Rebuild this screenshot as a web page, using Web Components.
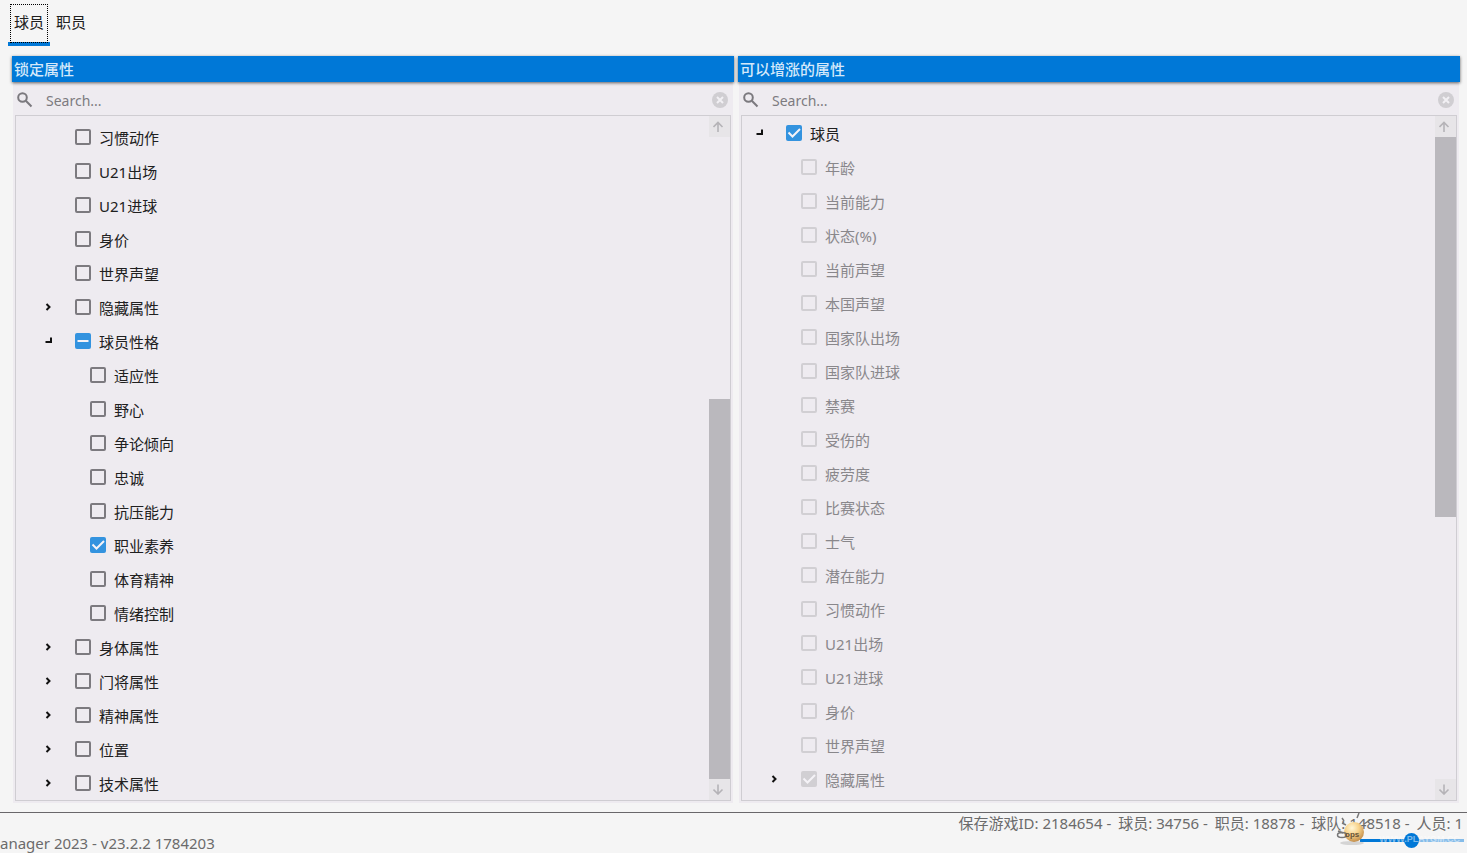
<!DOCTYPE html>
<html lang="zh-CN">
<head>
<meta charset="utf-8">
<title>属性设置</title>
<style>
  html, body {
    height: 100%;
    margin: 0;
  }
  body {
    background: #f5f5f5;
    color: #202020;
    font: 15px/20px "Noto Sans", "Noto Sans CJK SC", sans-serif;
    overflow: hidden;
  }
</style>
</head>
<body>
<attr-app></attr-app>
<script>
class TabBar extends HTMLElement {
  constructor() {
    super();
    this.attachShadow({ mode: 'open' });
  }

  connectedCallback() {
    const tabs = this.getAttribute('tabs').split(',');

    this.shadowRoot.innerHTML = `
      <style>
        :host {
          display: block;
          padding: 2px 8px 10px;
        }
        nav {
          display: flex;
        }
        button {
          box-sizing: border-box;
          height: 44px;
          padding: 2px 2px 3px;
          border: 0;
          border-bottom: 4px solid transparent;
          background: none;
          color: inherit;
          font: inherit;
        }
        button[aria-selected="true"] {
          border-bottom-color: #0078d7;
        }
        span {
          display: flex;
          align-items: center;
          box-sizing: border-box;
          height: 39px;
          padding: 0 3px 4px;
          border: 1px solid transparent;
        }
        button[aria-selected="true"] span {
          border: 1px dotted #000;
        }
      </style>
      <nav role="tablist">
        ${tabs.map((t, i) => `<button role="tab" aria-selected="${i === 0}"><span>${t}</span></button>`).join('')}
      </nav>
    `;
  }
}

class TreeItem extends HTMLElement {
  constructor() {
    super();
    this.attachShadow({ mode: 'open' });
  }

  connectedCallback() {
    const level = Number(this.getAttribute('level') || 0);
    const branch = this.getAttribute('branch');
    const state = this.getAttribute('state');
    const disabled = this.hasAttribute('disabled');
    const arrows = {
      closed: '<path d="M3.500 3 6.500 6 3.500 9" stroke-width="2"/>',
      open: '<path d="M8 2.500V7H2.500" stroke-width="2"/>'
    };

    this.shadowRoot.innerHTML = `
      <style>
        :host {
          display: block;
          flex: none;
        }
        .row {
          display: flex;
          align-items: center;
          height: 34px;
          padding-left: ${12 + level * 15}px;
        }
        .arrow {
          display: flex;
          width: 32px;
          height: 12px;
          padding: 0;
          border: 0;
          background: none;
        }
        svg {
          fill: none;
          stroke: #111;
        }
        label {
          display: flex;
          align-items: center;
          gap: 8px;
          color: ${disabled ? '#89878b' : 'inherit'};
        }
        span {
          padding-top: 2px;
        }
        input {
          appearance: none;
          flex: none;
          width: 16px;
          height: 16px;
          margin: 0;
          border: 2px solid #7c7a7f;
          border-radius: 2px;
        }
        input:disabled {
          border-color: #d1cfd3;
        }
        input:checked, input:indeterminate {
          border: 0;
          background-color: #3393df;
        }
        input:disabled:checked {
          background-color: #d1cfd3;
        }
        .box {
          display: grid;
        }
        .box > * {
          grid-area: 1 / 1;
        }
        .mark {
          stroke: #f5f3f7;
          stroke-width: 2;
          pointer-events: none;
        }
      </style>
      <div class="row">
        ${branch
          ? `<button class="arrow" aria-label="${branch}"><svg width="12" height="12">${arrows[branch]}</svg></button>`
          : '<div class="arrow"></div>'}
        <label>
          <div class="box">
            <input type="checkbox" ${state === 'checked' ? 'checked' : ''} ${disabled ? 'disabled' : ''}>
            ${state ? `<svg class="mark" width="16" height="16"><path d="${state === 'mixed' ? 'M2.500 8H13.500' : 'M2.500 7.500 6.500 11.500 14 4'}"/></svg>` : ''}
          </div>
          <span><slot></slot></span>
        </label>
      </div>
    `;
    this.shadowRoot.querySelector('input').indeterminate = state === 'mixed';
  }
}

class ScrollStrip extends HTMLElement {
  constructor() {
    super();
    this.attachShadow({ mode: 'open' });
  }

  connectedCallback() {
    const atEnd = this.getAttribute('at') === 'end';

    this.shadowRoot.innerHTML = `
      <style>
        :host {
          display: flex;
          flex-direction: column;
          flex: none;
          width: 21px;
        }
        button {
          display: flex;
          align-items: center;
          flex: none;
          height: 21px;
          padding: 0 4px;
          border: 0;
          background: #e7e5e8;
        }
        svg {
          fill: none;
          stroke: #b5b3b7;
          stroke-width: 1.600;
        }
        .track {
          display: flex;
          flex: 1;
          flex-direction: column;
          justify-content: ${atEnd ? 'flex-end' : 'flex-start'};
        }
        .thumb {
          height: 59.2%;
          background: #bab8bd;
        }
      </style>
      <button aria-label="up"><svg width="11" height="11"><path d="M5 11V1.500M.5 6 5 1.500 9.500 6"/></svg></button>
      <div class="track"><div class="thumb"></div></div>
      <button aria-label="down"><svg width="11" height="11"><path d="M5 .5V10M.5 5.500 5 10 9.500 5.500"/></svg></button>
    `;
  }
}

class AttrPanel extends HTMLElement {
  constructor() {
    super();
    this.attachShadow({ mode: 'open' });
  }

  connectedCallback() {
    const atEnd = this.getAttribute('at') === 'end';

    this.shadowRoot.innerHTML = `
      <style>
        :host {
          display: flex;
          flex: 1;
          flex-direction: column;
          min-width: 0;
          min-height: 0;
        }
        h2 {
          position: relative;
          flex: none;
          height: 26px;
          margin: 0;
          padding-left: 2px;
          background: #0078d7;
          box-shadow: 0 1px 3px rgba(0, 0, 0, 0.6);
          color: #d5e9fa;
          font: 500 15px/26px "Noto Sans", "Noto Sans CJK SC", sans-serif;
        }
        .body {
          display: flex;
          flex: 1;
          flex-direction: column;
          min-height: 0;
          margin: 0 1px;
          padding: 0 2px 2px;
          background: #eeebf0;
        }
        .search {
          display: flex;
          align-items: center;
          flex: none;
          height: 33px;
          padding: 2px 3px 0 2px;
          box-sizing: border-box;
        }
        .search svg {
          flex: none;
        }
        input {
          flex: 1;
          min-width: 0;
          margin-left: 13px;
          padding: 2px 0 0;
          border: 0;
          outline: 0;
          background: none;
          color: inherit;
          font: 14px/20px "Noto Sans", "Noto Sans CJK SC", sans-serif;
        }
        input::placeholder {
          color: #7d7b80;
          opacity: 1;
        }
        .clear {
          display: flex;
          padding: 0;
          border: 0;
          background: none;
        }
        .tree {
          display: flex;
          flex: 1;
          min-height: 0;
          border: 1px solid #cfcdd2;
        }
        .items {
          display: flex;
          flex: 1;
          flex-direction: column;
          justify-content: ${atEnd ? 'flex-end' : 'flex-start'};
          min-width: 0;
          overflow: hidden;
        }
      </style>
      <h2>${this.getAttribute('heading')}</h2>
      <div class="body">
        <div class="search">
          <svg width="16" height="16" fill="none" stroke="#7b797e" stroke-width="2">
            <circle cx="5.500" cy="5.500" r="4.300"/><path d="M8.800 8.800 14.500 14.500"/>
          </svg>
          <input type="text" placeholder="Search..." aria-label="Search">
          <button class="clear" aria-label="clear">
            <svg width="16" height="16"><circle cx="8" cy="8" r="8" fill="#d0ced2"/><path d="M5 5 11 11M11 5 5 11" stroke="#f2f0f4" stroke-width="2"/></svg>
          </button>
        </div>
        <div class="tree">
          <div class="items" role="tree"><slot></slot></div>
          <scroll-strip at="${atEnd ? 'end' : 'start'}"></scroll-strip>
        </div>
      </div>
    `;
  }
}

class StatusBar extends HTMLElement {
  constructor() {
    super();
    this.attachShadow({ mode: 'open' });
  }

  connectedCallback() {
    const parts = ['保存游戏ID: 2184654 -', '球员: 34756 -', '职员: 18878 -', '球队: 148518 -', '人员: 1'];

    this.shadowRoot.innerHTML = `
      <style>
        :host {
          display: block;
          position: relative;
          flex: none;
          height: 40px;
          border-top: 1px solid #69676a;
          color: #6b6b6b;
          overflow: hidden;
          white-space: nowrap;
        }
        .save {
          display: flex;
          justify-content: flex-end;
          gap: 7px;
          padding-right: 4px;
        }
        .zoom {
          position: absolute;
          right: 3px;
          bottom: 5px;
          appearance: none;
          width: 104px;
          height: 15px;
          margin: 0;
          background: linear-gradient(90deg, #0078d7 50%, #85bce9 50%) center / 100% 3px no-repeat;
        }
        .zoom::-webkit-slider-thumb {
          appearance: none;
          width: 15px;
          height: 15px;
          border-radius: 50%;
          background: #0078d7;
        }
        .mascot {
          position: absolute;
          right: 74px;
          bottom: 6px;
        }
        .site {
          position: absolute;
          right: 7px;
          bottom: 8px;
          color: rgba(255, 255, 255, 0.5);
          font: bold 9px/12px "Liberation Sans", sans-serif;
          pointer-events: none;
        }
      </style>
      <div class="save">${parts.map(p => `<span>${p}</span>`).join('')}</div>
      <div class="version">anager 2023 - v23.2.2 1784203</div>
      <input class="zoom" type="range" aria-label="zoom" min="0" max="100" value="49">
      <svg class="mascot" width="58" height="36" viewBox="0 0 58 36">
        <defs>
          <radialGradient id="ball" cx=".4" cy=".3" r=".7">
            <stop offset="0" stop-color="#fff6d8"/><stop offset=".5" stop-color="#f7d28a"/><stop offset="1" stop-color="#c48f4c"/>
          </radialGradient>
        </defs>
        <ellipse cx="17" cy="32" rx="12" ry="2" fill="#999" opacity=".35"/>
        <circle cx="19" cy="21" r="10" fill="url(#ball)"/>
        <g fill="none" stroke="#777" stroke-width="1.500">
          <path d="M9 10 7 7M11 14 7 12M22 7 24 2M29 13 35 9M3 20 8 22"/>
          <ellipse cx="7" cy="24" rx="4.500" ry="2.500"/>
        </g>
        <text x="10" y="26" font-family="Liberation Sans" font-size="8" font-weight="bold" fill="#635138">ops</text>
      </svg>
      <div class="site">WWW.PLAYGM.CC</div>
    `;
  }
}

class AttrApp extends HTMLElement {
  constructor() {
    super();
    this.attachShadow({ mode: 'open' });
  }

  connectedCallback() {
    const locked = [
      ['习惯动作', 1], ['U21出场', 1], ['U21进球', 1], ['身价', 1], ['世界声望', 1],
      ['隐藏属性', 1, 'closed'], ['球员性格', 1, 'open', 'mixed'],
      ['适应性', 2], ['野心', 2], ['争论倾向', 2], ['忠诚', 2], ['抗压能力', 2],
      ['职业素养', 2, '', 'checked'], ['体育精神', 2], ['情绪控制', 2],
      ['身体属性', 1, 'closed'], ['门将属性', 1, 'closed'], ['精神属性', 1, 'closed'],
      ['位置', 1, 'closed'], ['技术属性', 1, 'closed']
    ];
    const names = ['年龄', '当前能力', '状态(%)', '当前声望', '本国声望', '国家队出场', '国家队进球',
      '禁赛', '受伤的', '疲劳度', '比赛状态', '士气', '潜在能力', '习惯动作', 'U21出场', 'U21进球',
      '身价', '世界声望'];
    const growable = [
      ['球员', 0, 'open', 'checked'],
      ...names.map(n => [n, 1, '', '', true]),
      ['隐藏属性', 1, 'closed', 'checked', true]
    ];
    const items = list => list.map(([name, level, branch, state, disabled]) =>
      `<tree-item level="${level}" branch="${branch || ''}" state="${state || ''}" ${disabled ? 'disabled' : ''}>${name}</tree-item>`
    ).join('');

    this.shadowRoot.innerHTML = `
      <style>
        :host {
          display: flex;
          flex-direction: column;
          height: 100vh;
        }
        main {
          display: flex;
          flex: 1;
          gap: 4px;
          min-height: 0;
          padding: 0 7px 9px 12px;
        }
      </style>
      <tab-bar tabs="球员,职员"></tab-bar>
      <main>
        <attr-panel heading="锁定属性" at="end">${items(locked)}</attr-panel>
        <attr-panel heading="可以增涨的属性">${items(growable)}</attr-panel>
      </main>
      <status-bar></status-bar>
    `;
  }
}

customElements.define('tab-bar', TabBar);
customElements.define('tree-item', TreeItem);
customElements.define('scroll-strip', ScrollStrip);
customElements.define('attr-panel', AttrPanel);
customElements.define('status-bar', StatusBar);
customElements.define('attr-app', AttrApp);
</script>
</body>
</html>
